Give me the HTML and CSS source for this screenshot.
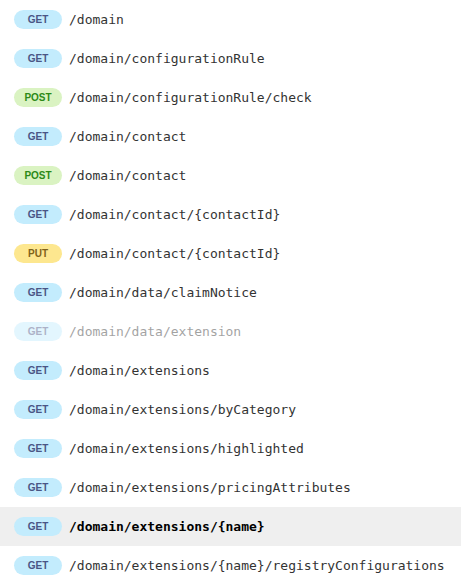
FILE: index.html
```html
<!DOCTYPE html>
<html>
<head>
<meta charset="utf-8">
<link rel="stylesheet" href="styles.css">
</head>
<body>
<ul class="list">
  <li class="row"><span class="badge get">GET</span><span class="path">/domain</span></li>
  <li class="row"><span class="badge get">GET</span><span class="path">/domain/configurationRule</span></li>
  <li class="row"><span class="badge post">POST</span><span class="path">/domain/configurationRule/check</span></li>
  <li class="row"><span class="badge get">GET</span><span class="path">/domain/contact</span></li>
  <li class="row"><span class="badge post">POST</span><span class="path">/domain/contact</span></li>
  <li class="row"><span class="badge get">GET</span><span class="path">/domain/contact/{contactId}</span></li>
  <li class="row"><span class="badge put">PUT</span><span class="path">/domain/contact/{contactId}</span></li>
  <li class="row"><span class="badge get">GET</span><span class="path">/domain/data/claimNotice</span></li>
  <li class="row disabled"><span class="badge get">GET</span><span class="path">/domain/data/extension</span></li>
  <li class="row"><span class="badge get">GET</span><span class="path">/domain/extensions</span></li>
  <li class="row"><span class="badge get">GET</span><span class="path">/domain/extensions/byCategory</span></li>
  <li class="row"><span class="badge get">GET</span><span class="path">/domain/extensions/highlighted</span></li>
  <li class="row"><span class="badge get">GET</span><span class="path">/domain/extensions/pricingAttributes</span></li>
  <li class="row active"><span class="badge get">GET</span><span class="path">/domain/extensions/{name}</span></li>
  <li class="row"><span class="badge get">GET</span><span class="path">/domain/extensions/{name}/registryConfigurations</span></li>
</ul>
</body>
</html>
```
FILE: styles.css
```css
html, body {
  margin: 0;
  padding: 0;
  background: #ffffff;
}
.list {
  list-style: none;
  margin: 0;
  padding: 0;
}
.row {
  display: flex;
  align-items: center;
  gap: 7px;
  height: 39px;
  padding-left: 14px;
  white-space: nowrap;
}
.row.active {
  background: #efefef;
}
.row.active .path {
  color: #000000;
  font-weight: bold;
}
.row.disabled {
  opacity: 0.45;
}
.badge {
  display: inline-flex;
  align-items: center;
  justify-content: center;
  width: 48px;
  height: 19px;
  border-radius: 10px;
  font-family: "Liberation Sans", Arial, sans-serif;
  font-weight: bold;
  font-size: 10px;
  flex-shrink: 0;
}
.badge.get {
  background: #c3ecfd;
  color: #4a5585;
}
.badge.post {
  background: #daf3c2;
  color: #2c8a17;
}
.badge.put {
  background: #fde78f;
  color: #80621a;
}
.path {
  font-family: "DejaVu Sans Mono", monospace;
  font-size: 13px;
  color: #333333;
}
```
